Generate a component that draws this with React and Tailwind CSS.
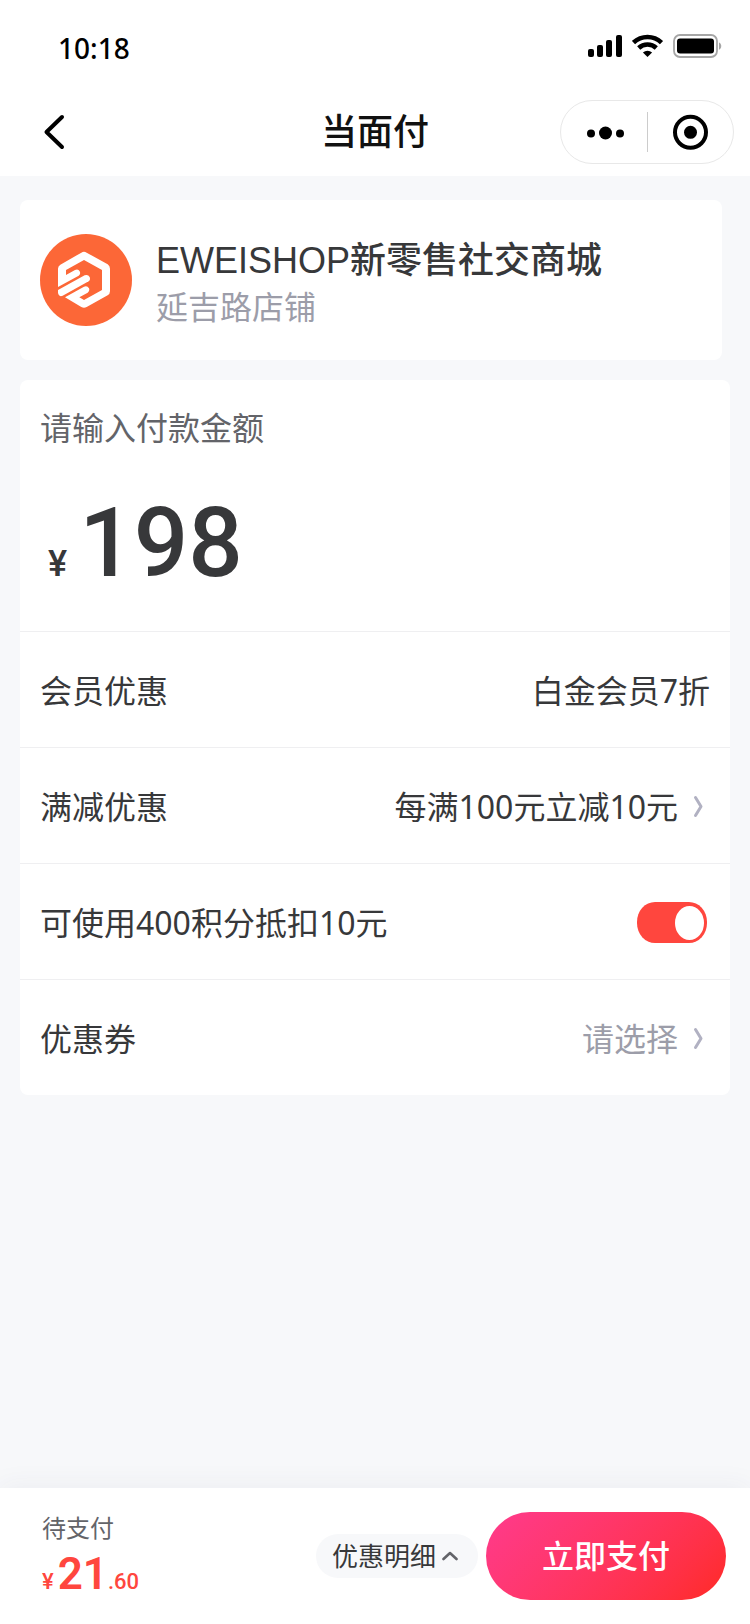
import { useState } from "react";

const SignalIcon = () => (
  <svg width="36" height="24" viewBox="0 0 36 24" aria-hidden="true">
    <rect x="0" y="15" width="6" height="8" rx="2" />
    <rect x="9" y="11" width="6" height="12" rx="2" />
    <rect x="18" y="6" width="6" height="17" rx="2" />
    <rect x="28" y="1" width="6" height="22" rx="2" />
  </svg>
);

const WifiIcon = () => (
  <svg width="32" height="24" viewBox="0 0 32 24" fill="none" aria-hidden="true">
    <path d="M1.500 8.6a20.5 20.5 0 0 1 28 0" stroke="#000" strokeWidth="4.6" />
    <path d="M6.700 14a13 13 0 0 1 17.6 0" stroke="#000" strokeWidth="4.6" />
    <path d="M10.900 18.4a7 7 0 0 1 9.2 0L15.500 23z" fill="#000" />
  </svg>
);

const BatteryIcon = () => (
  <svg width="50" height="24" viewBox="0 0 50 24" aria-hidden="true">
    <rect x="2" y="1" width="43" height="22" rx="6" fill="none" stroke="#a6a6a6" strokeWidth="1.8" />
    <rect x="5" y="4.500" width="37" height="15" rx="3" />
    <path d="M47 8.500c3 1.200 3 6 0 7.200z" fill="#a6a6a6" />
  </svg>
);

const ShopLogo = () => (
  <svg className="size-23 shrink-0" viewBox="0 0 276 276" aria-hidden="true">
    <circle cx="138" cy="138" r="138" fill="#fc6737" />
    <path
      fill="#fff"
      d="M54 159V104Q54 96 61 92L124 56Q132 51 140 56L203 91Q210 96 210 104V172Q210 180 203 184L140 219Q132 224 124 219L75 190L132 158Q142 154 147 163Q150 171 143 176L118 190L132 198L186 168V108L132 78L78 108V123L105 108Q115 104 119 112Q123 120 116 125Z"
    />
    <path
      fill="#fff"
      d="M54 168L134 124Q144 120 149 129Q152 138 146 142L68 185Q60 189 56 182L54 177Z"
    />
  </svg>
);

const ArrowRight = () => (
  <svg className="size-8" viewBox="0 0 32 32" fill="none" aria-hidden="true">
    <path d="M17.500 6.500L23 15.500L17.500 24.500" stroke="#b1b1c2" strokeWidth="3" strokeLinecap="round" strokeLinejoin="round" />
  </svg>
);

const rowClasses =
  "flex w-full items-center justify-between border-t border-[#efeff1] h-29 px-5 pt-0.5 text-[32px] text-[#37383a]";

export default function App() {
  const [amount, setAmount] = useState("198");
  const [usePoints, setUsePoints] = useState(true);

  return (
    <main className="flex flex-col min-h-screen bg-[#f7f8fa] font-['Noto_Sans','Noto_Sans_CJK_SC',sans-serif]">
      <header className="bg-white text-black">
        <div className="flex items-center justify-between h-22 pt-1 pl-[58px] pr-7">
          <span className="text-[28px] font-medium pt-1">10:18</span>
          <div className="flex items-center gap-2">
            <SignalIcon />
            <WifiIcon />
            <BatteryIcon />
          </div>
        </div>

        <nav className="grid grid-cols-[1fr_auto_1fr] items-center h-22 px-4">
          <button className="justify-self-start pl-5" aria-label="返回">
            <svg width="36" height="40" viewBox="0 0 36 40" fill="none">
              <path d="M26 5L10.500 20L26 35" stroke="#000" strokeWidth="4" strokeLinecap="round" strokeLinejoin="round" />
            </svg>
          </button>
          <h1 className="text-4xl font-medium text-[#111]">当面付</h1>
          <div className="justify-self-end flex items-center w-[174px] h-16 rounded-full border border-[#e8e8e8]">
            <button className="flex flex-1 justify-center" aria-label="更多">
              <svg width="40" height="16" viewBox="0 0 40 16">
                <circle cx="7" cy="9.500" r="4" />
                <circle cx="21.500" cy="9" r="6.500" />
                <circle cx="36" cy="9.500" r="4" />
              </svg>
            </button>
            <span className="w-px h-10 bg-[#ccc]" />
            <button className="flex flex-1 justify-center" aria-label="关闭">
              <svg width="36" height="36" viewBox="0 0 36 36">
                <circle cx="18.500" cy="18.300" r="15.500" fill="none" stroke="#000" strokeWidth="4" />
                <circle cx="18.500" cy="18.300" r="6.500" />
              </svg>
            </button>
          </div>
        </nav>
      </header>

      <section className="flex items-center gap-6 h-40 mt-6 ml-5 mr-7 px-5 bg-white rounded-lg">
        <ShopLogo />
        <div className="pt-1.5">
          <h2 className="text-4xl leading-12 font-medium text-[#37383a] font-['Liberation_Sans','Noto_Sans_CJK_SC',sans-serif]">
            EWEISHOP新零售社交商城
          </h2>
          <p className="text-[32px] leading-11 text-[#9c9da9]">延吉路店铺</p>
        </div>
      </section>

      <section className="mt-5 mx-5 mb-5 bg-white rounded-lg">
        <div className="px-5 pt-6 pb-6">
          <label htmlFor="amount" className="block text-[32px] leading-12 text-[#636469]">
            请输入付款金额
          </label>
          <div className="flex items-baseline gap-3 mt-[27px] px-2 text-[#37383a] font-[Roboto,sans-serif]">
            <span className="text-4xl font-medium">¥</span>
            <input
              id="amount"
              className="min-w-0 flex-1 h-32 text-8xl font-medium outline-none"
              inputMode="decimal"
              value={amount}
              onChange={(e) => setAmount(e.target.value)}
            />
          </div>
        </div>

        <div className={rowClasses}>
          <span>会员优惠</span>
          <span>白金会员7折</span>
        </div>
        <button className={rowClasses}>
          <span>满减优惠</span>
          <span className="flex items-center">
            每满100元立减10元
            <ArrowRight />
          </span>
        </button>
        <div className={rowClasses}>
          <label htmlFor="points">可使用400积分抵扣10元</label>
          <input
            id="points"
            type="checkbox"
            role="switch"
            checked={usePoints}
            onChange={(e) => setUsePoints(e.target.checked)}
            className="flex items-center appearance-none w-[70px] h-[41px] mr-[3px] px-[3px] rounded-[18px/20px] bg-[#d5d6db] checked:bg-[#ff463e] checked:justify-end before:w-[29px] before:h-[34px] before:rounded-[50%] before:bg-white"
          />
        </div>
        <button className={rowClasses}>
          <span>优惠券</span>
          <span className="flex items-center text-[#9c9da9]">
            请选择
            <ArrowRight />
          </span>
        </button>
      </section>

      <footer className="flex items-center mt-auto py-5 pl-[42px] pr-6 bg-white shadow-[0_-4px_24px_rgba(50,50,90,0.05)]">
        <div className="mr-auto pt-1">
          <p className="text-2xl leading-8 text-[#636469]">待支付</p>
          <p className="flex items-baseline mt-2 leading-11 text-[#ff463e] font-medium font-[Roboto,sans-serif]">
            <span className="text-[22px] mr-1">¥</span>
            <span className="text-[44px] font-semibold">21</span>
            <span className="text-[22px]">.60</span>
          </p>
        </div>
        <button className="flex items-center gap-1.5 h-11 pl-4 pr-5 mr-2 rounded-full bg-[#f7f8fa] text-[26px] text-[#37383a]">
          优惠明细
          <svg width="16" height="10" viewBox="0 0 16 10" fill="none" aria-hidden="true">
            <path d="M1.500 8L8 2L14.500 8" stroke="#636469" strokeWidth="2.600" strokeLinecap="round" strokeLinejoin="round" />
          </svg>
        </button>
        <button className="w-60 h-22 rounded-full bg-linear-135 from-[#ff3a8c] to-[#ff2a22] text-[32px] font-medium text-white">
          立即支付
        </button>
      </footer>
    </main>
  );
}
